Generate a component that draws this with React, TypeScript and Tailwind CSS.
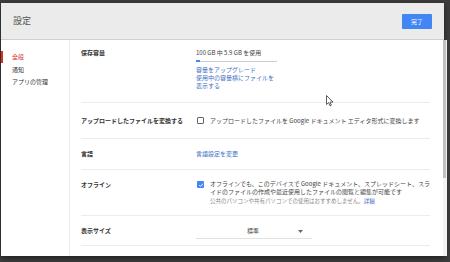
import React from "react";

export default function App() {
  const font = "font-['Noto_Sans_CJK_JP','Noto_Sans',sans-serif]";
  return (
    <div className={`w-[450px] h-[262px] bg-[#3d3d3d] pt-[3px] pl-[1px] relative overflow-hidden ${font}`}>
      <div className="w-[443px] h-[253px] bg-white flex flex-col shadow-[0_2px_6px_rgba(0,0,0,0.5)]">
        {/* header */}
        <div className="h-[37px] bg-[#ebebeb] border-b border-[#cfcfcf] flex items-center justify-between pl-[12px] pr-[12px] shrink-0">
          <span className="text-[9px] text-[#555]">設定</span>
          <button className="w-[30px] h-[15px] bg-[#4285f4] text-white text-[6px] rounded-[1px] flex items-center justify-center">完了</button>
        </div>
        {/* body */}
        <div className="flex flex-1 min-h-0">
          {/* nav */}
          <div className="w-[69px] border-r border-[#ececec] pt-[11px] shrink-0 text-[6px] leading-[12.5px]">
            <div className="flex items-center">
              <div className="w-[2px] h-[12px] bg-[#d93025] mr-[9px]" />
              <span className="text-[#d93025]">全般</span>
            </div>
            <div className="pl-[11px] text-[#333]">通知</div>
            <div className="pl-[11px] text-[#333]">アプリの管理</div>
          </div>
          {/* content */}
          <div className="flex-1 pl-[11px] pr-[13px] text-[6px] leading-[8px] text-[#444]">
            {/* row 1 */}
            <div className="h-[62px] flex pt-[9px]">
              <div className="w-[115px] font-bold text-[#333]">保存容量</div>
              <div className="flex flex-col">
                <span>100 GB 中 5.9 GB を使用</span>
                <div className="w-[81px] h-[1px] bg-[#cfcfcf] mt-[4px] mb-[4px] relative">
                  <div className="absolute left-0 top-[-1px] w-[4px] h-[2px] bg-[#4285f4]" />
                </div>
                <span className="text-[#3f6fc4]">容量をアップグレード</span>
                <span className="text-[#3f6fc4]">使用中の容量横にファイルを</span>
                <span className="text-[#3f6fc4]">表示する</span>
              </div>
            </div>
            {/* row 2 */}
            <div className="h-[36px] flex items-center border-t border-[#ececec]">
              <div className="w-[115px] font-bold text-[#333]">アップロードしたファイルを変換する</div>
              <div className="flex items-center">
                <div className="w-[7px] h-[7px] border border-[#666] rounded-[1px] ml-[1px] mr-[6px]" />
                <span>アップロードしたファイルを Google ドキュメント エディタ形式に変換します</span>
              </div>
            </div>
            {/* row 3 */}
            <div className="h-[31px] flex items-center border-t border-[#ececec]">
              <div className="w-[115px] font-bold text-[#333]">言語</div>
              <span className="text-[#3f6fc4]">言語設定を変更</span>
            </div>
            {/* row 4 */}
            <div className="h-[46px] flex pt-[10px] border-t border-[#ececec]">
              <div className="w-[115px] font-bold text-[#333] pt-[1px]">オフライン</div>
              <div className="flex">
                <div className="w-[7px] h-[7px] bg-[#4285f4] rounded-[1px] ml-[1px] mr-[6px] mt-[1px] flex items-center justify-center shrink-0">
                  <svg width="6" height="6" viewBox="0 0 10 10">
                    <path d="M2 5.2 L4.2 7.4 L8.3 2.8" stroke="white" strokeWidth="1.6" fill="none" />
                  </svg>
                </div>
                <div className="flex flex-col">
                  <span className="whitespace-nowrap">オフラインでも、このデバイスで Google ドキュメント、スプレッドシート、スラ</span>
                  <span>イドのファイルの作成や最近使用したファイルの閲覧と編集が可能です</span>
                  <span className="text-[5.5px] text-[#888] mt-[1px] whitespace-nowrap">
                    公共のパソコンや共有パソコンでの使用はおすすめしません。<span className="text-[#3f6fc4]">詳細</span>
                  </span>
                </div>
              </div>
            </div>
            {/* row 5 */}
            <div className="h-[31px] flex items-center border-t border-b border-[#ececec]">
              <div className="w-[115px] font-bold text-[#333]">表示サイズ</div>
              <div className="w-[116px] h-[14px] border-b border-[#e2e2e2] flex items-center justify-between pl-[51px] pr-[9px] mt-[2px]">
                <span className="text-[#444]">標準</span>
                <svg width="5" height="3" viewBox="0 0 5 3">
                  <path d="M0 0 L5 0 L2.5 3 Z" fill="#666" />
                </svg>
              </div>
            </div>
          </div>
          {/* scrollbar */}
          <div className="w-[4px] flex flex-col bg-[#f4f4f4] mr-[1px] shrink-0">
            <div className="h-[138px] w-[3px] bg-[#c1c1c1]" />
          </div>
        </div>
      </div>
      {/* cursor */}
      <svg className="absolute left-[326px] top-[95px]" width="8" height="12" viewBox="0 0 8 12">
        <path d="M0.5 0.5 L0.5 9.5 L2.6 7.6 L4 10.8 L5.3 10.2 L4 7.1 L7 7.1 Z" fill="white" stroke="#333" strokeWidth="0.8" />
      </svg>
    </div>
  );
}
